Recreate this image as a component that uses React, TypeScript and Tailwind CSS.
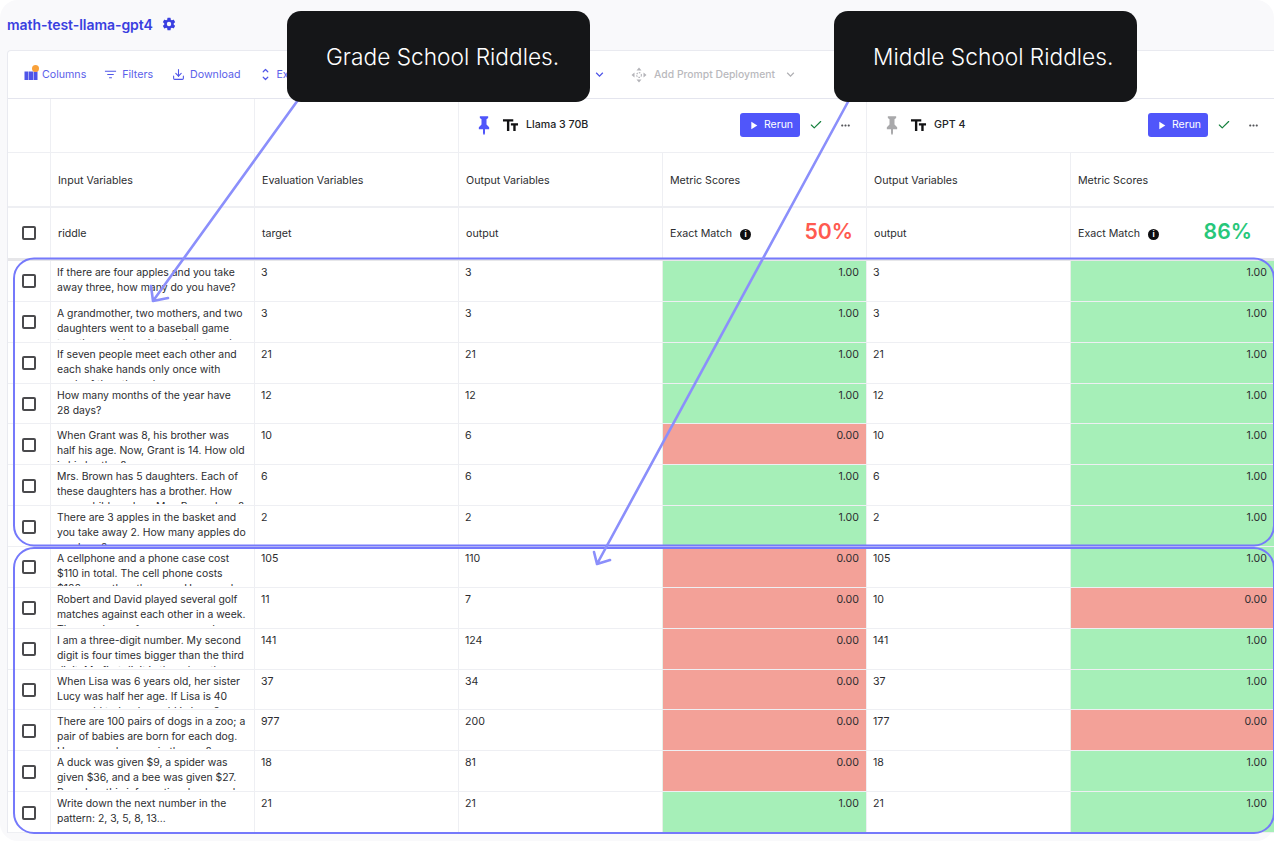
import React from "react";
import { MdPlayArrow, MdMoreHoriz, MdTextFields, MdKeyboardArrowDown } from "react-icons/md";
import { IoSettingsSharp } from "react-icons/io5";
import { LuDownload, LuCheck } from "react-icons/lu";

type Row = { q: string; target: string; o1: string; s1: number; o2: string; s2: number };
const rows: Row[] = [
  { q: "If there are four apples and you take away three, how many do you have?", target: "3", o1: "3", s1: 1, o2: "3", s2: 1 },
  { q: "A grandmother, two mothers, and two daughters went to a baseball game together and bought one ticket each. How", target: "3", o1: "3", s1: 1, o2: "3", s2: 1 },
  { q: "If seven people meet each other and each shake hands only once with each of the others, how", target: "21", o1: "21", s1: 1, o2: "21", s2: 1 },
  { q: "How many months of the year have 28 days?", target: "12", o1: "12", s1: 1, o2: "12", s2: 1 },
  { q: "When Grant was 8, his brother was half his age. Now, Grant is 14. How old is his brother?", target: "10", o1: "6", s1: 0, o2: "10", s2: 1 },
  { q: "Mrs. Brown has 5 daughters. Each of these daughters has a brother. How many children does Mrs. Brown have?", target: "6", o1: "6", s1: 1, o2: "6", s2: 1 },
  { q: "There are 3 apples in the basket and you take away 2. How many apples do you have?", target: "2", o1: "2", s1: 1, o2: "2", s2: 1 },
  { q: "A cellphone and a phone case cost $110 in total. The cell phone costs $100 more than the case. How much", target: "105", o1: "110", s1: 0, o2: "105", s2: 1 },
  { q: "Robert and David played several golf matches against each other in a week. They each won four games, and", target: "11", o1: "7", s1: 0, o2: "10", s2: 0 },
  { q: "I am a three-digit number. My second digit is four times bigger than the third digit. My first digit is three less than", target: "141", o1: "124", s1: 0, o2: "141", s2: 1 },
  { q: "When Lisa was 6 years old, her sister Lucy was half her age. If Lisa is 40 years old today, how old is Lucy?", target: "37", o1: "34", s1: 0, o2: "37", s2: 1 },
  { q: "There are 100 pairs of dogs in a zoo; a pair of babies are born for each dog. How many dogs are in the zoo?", target: "977", o1: "200", s1: 0, o2: "177", s2: 0 },
  { q: "A duck was given $9, a spider was given $36, and a bee was given $27. Based on this information, how much", target: "18", o1: "81", s1: 0, o2: "18", s2: 1 },
  { q: "Write down the next number in the pattern: 2, 3, 5, 8, 13...", target: "21", o1: "21", s1: 1, o2: "21", s2: 1 },
];

const GRID = "grid grid-cols-[42px_204px_204px_204px_204px_204px_204px]";
const CELL = "border-l border-[#eeeff3] min-w-0";

function Checkbox() {
  return <div className="w-[14px] h-[14px] rounded-[2px] border-2 border-[#4a4a4d] bg-white" />;
}

function Score({ v }: { v: number }) {
  return (
    <div className={`${v ? "bg-[#a6efb8]" : "bg-[#f3a198]"} border-l border-[#e6f0e8] text-right pr-[7px] pt-[4px] text-[10.6px] leading-[15px] text-[#2c2d30]`}>
      {v.toFixed(2)}
    </div>
  );
}

function Pin({ color }: { color: string }) {
  return (
    <svg viewBox="0 0 24 24" className="w-[20px] h-[20px]" fill={color}>
      <path d="M7 1.5h10v2.2l-2 1.3v6.5l3.2 3.3v2.2H13.2v5l-1.2 2.5-1.2-2.5v-5H5.8v-2.2L9 11.5V5L7 3.7z" />
    </svg>
  );
}

function ModelHead({ pinned, name }: { pinned: boolean; name: string }) {
  return (
    <div className="col-span-2 border-l border-[#eeeff3] flex items-center pl-[15px] pr-[14px] pb-[1px]">
      <Pin color={pinned ? "#4f55fa" : "#a9a9ab"} />
      <MdTextFields className="ml-[7px] text-[#111113]" size={19} />
      <span className="ml-[6px] text-[10.65px] font-medium text-[#222326]">{name}</span>
      <button className="ml-auto h-[24px] w-[60px] rounded-[3px] bg-[#5056fa] flex items-center justify-center gap-[4px] text-[10.5px] text-white">
        <MdPlayArrow size={13} />
        Rerun
      </button>
      <LuCheck className="ml-[9px] text-[#15803d]" size={14} strokeWidth={2} />
      <MdMoreHoriz className="ml-[16px] text-[#55565a]" size={13} />
    </div>
  );
}

function Info() {
  return (
    <span className="ml-[8px] inline-flex w-[11px] h-[11px] rounded-full bg-[#0e0e10] text-white text-[8px] font-bold items-center justify-center leading-none">i</span>
  );
}

export default function App() {
  return (
    <div className="relative w-[1274px] h-[841px] bg-white overflow-hidden font-['Inter',sans-serif]">
      <div className="h-full rounded-[18px] bg-[#f9f9fb] flex flex-col">
        <div className="h-[50px] pl-[7px] pb-[2px] flex items-center gap-[8px] shrink-0">
          <span className="text-[14px] font-semibold text-[#3a3fe0] tracking-[-0.05px]">math-test-llama-gpt4</span>
          <IoSettingsSharp className="text-[#3a3fe0] ml-[1px]" size={14} />
        </div>
        <div className="ml-[7px] border-l border-t border-[#e9eaf0] rounded-tl-[4px] bg-white w-[1267px]">
          <div className="h-[48px] border-b border-[#e4e5ee] flex items-center pl-[16px] text-[10.65px] text-[#5a60ea]">
            <span className="relative w-[14px] h-[14px] mr-[4px]">
              <svg viewBox="0 0 14 14" className="w-[14px] h-[14px]">
                <rect x="0.5" y="3.5" width="4" height="8.5" fill="#4f55e8" />
                <rect x="5" y="3.5" width="4" height="8.5" fill="#4f55e8" />
                <rect x="9.5" y="3.5" width="4" height="8.5" fill="#4f55e8" />
              </svg>
              <span className="absolute right-[-1px] top-[-3px] w-[7px] h-[7px] rounded-full bg-[#f9a13a]" />
            </span>
            <span>Columns</span>
            <svg viewBox="0 0 14 14" className="ml-[18px] w-[13px] h-[13px]" fill="none" stroke="#4f55e8" strokeWidth="1.3">
              <path d="M1 3.5h12M3.5 7h7M5.5 10.5h3" />
            </svg>
            <span className="ml-[5px]">Filters</span>
            <LuDownload className="ml-[19px] text-[#4f55e8]" size={13} />
            <span className="ml-[5px]">Download</span>
            <svg viewBox="0 0 12 14" className="ml-[20px] w-[11px] h-[13px]" fill="none" stroke="#4f55e8" strokeWidth="1.3" strokeLinecap="round" strokeLinejoin="round">
              <path d="M3.5 4L6 1.5 8.5 4M3.5 10L6 12.5 8.5 10" />
            </svg>
            <span className="ml-[5px]">Expand</span>
            <MdKeyboardArrowDown className="ml-[278px] text-[#4f55e8]" size={15} />
            <svg viewBox="0 0 16 16" className="ml-[24px] w-[16px] h-[16px]" fill="#b4b4b9">
              <path d="M8 .5L10.500 3.500h-5zM8 15.500L5.500 12.500h5zM.5 8L3.500 5.500v5zM15.500 8L12.500 10.500v-5z" />
              <circle cx="8" cy="8" r="2.4" fill="none" stroke="#b4b4b9" strokeWidth="1.1" strokeDasharray="1.5 1" />
            </svg>
            <span className="ml-[7px] text-[#b9b9bd] text-[10.35px] font-medium">Add Prompt Deployment</span>
            <MdKeyboardArrowDown className="ml-[8px] text-[#b0b0b4]" size={15} />
          </div>

          <div className={`${GRID} h-[54px] border-b border-[#eeeff3]`}>
            <div />
            <div className={CELL} />
            <div className={CELL} />
            <ModelHead pinned name="Llama 3 70B" />
            <ModelHead pinned={false} name="GPT 4" />
          </div>

          <div className={`${GRID} h-[55px] border-b-2 border-[#eeeff3] text-[10.65px] text-[#2c2d30]`}>
            <div />
            {["Input Variables", "Evaluation Variables", "Output Variables", "Metric Scores", "Output Variables", "Metric Scores"].map((t, i) => (
              <div key={i} className={`${CELL} flex items-center pl-[7px] pt-[2px]`}>{t}</div>
            ))}
          </div>

          <div className={`${GRID} h-[53px] border-b-[3px] border-[#e6e6e9] text-[10.65px] text-[#2c2d30]`}>
            <div className="flex items-center justify-center"><Checkbox /></div>
            <div className={`${CELL} flex items-center pl-[7px] pt-[2px]`}>riddle</div>
            <div className={`${CELL} flex items-center pl-[7px] pt-[2px]`}>target</div>
            <div className={`${CELL} flex items-center pl-[7px] pt-[2px]`}>output</div>
            <div className={`${CELL} flex items-center pl-[7px] pr-[13px] pt-[2px]`}>
              Exact Match<Info />
              <span className="ml-auto mb-[5px] text-[21.2px] font-semibold text-[#ff5a50]">50%</span>
            </div>
            <div className={`${CELL} flex items-center pl-[7px] pt-[2px]`}>output</div>
            <div className={`${CELL} flex items-center pl-[7px] pr-[22px] pt-[2px]`}>
              Exact Match<Info />
              <span className="ml-auto mb-[5px] text-[21.2px] font-semibold text-[#27c77a]">86%</span>
            </div>
          </div>

          {rows.map((r, i) => (
            <div key={i} className={`${GRID} h-[40.86px] border-b border-[#eeeff3] text-[10.6px] leading-[15px] text-[#2c2d30] overflow-hidden`}>
              <div className="flex items-center justify-center pt-[1px]"><Checkbox /></div>
              <div className={`${CELL} pl-[6px] pr-[8px] pt-[4px] text-[10.4px]`}>
                <div className="h-[34.5px] overflow-hidden">{r.q}</div>
              </div>
              <div className={`${CELL} pl-[6px] pt-[4px]`}>{r.target}</div>
              <div className={`${CELL} pl-[6px] pt-[4px]`}>{r.o1}</div>
              <Score v={r.s1} />
              <div className={`${CELL} pl-[6px] pt-[4px]`}>{r.o2}</div>
              <Score v={r.s2} />
            </div>
          ))}
        </div>
      </div>

      <svg className="absolute inset-0 w-[1274px] h-[841px] pointer-events-none" viewBox="0 0 1274 841" fill="none">
        <rect x="14" y="258.500" width="1260" height="287" rx="20" stroke="#7579fb" strokeWidth="2" />
        <rect x="14" y="548" width="1260" height="285" rx="20" stroke="#7579fb" strokeWidth="2" />
        <path d="M298 100L153 301M168 298L153 301L151 286" stroke="#8b8ffb" strokeWidth="2.6" strokeLinecap="round" strokeLinejoin="round" />
        <path d="M849 100L597 564M610 560L597 564L594 552" stroke="#8b8ffb" strokeWidth="2.6" strokeLinecap="round" strokeLinejoin="round" />
      </svg>

      <div className="absolute left-[287px] top-[11px] w-[303px] h-[91px] rounded-[14px] bg-[#151618] flex items-center pl-[39px] pt-[2px] text-[22.7px] font-light text-white">
        Grade School Riddles.
      </div>
      <div className="absolute left-[834px] top-[11px] w-[303px] h-[91px] rounded-[14px] bg-[#151618] flex items-center pl-[39px] pt-[2px] text-[22.7px] font-light text-white">
        Middle School Riddles.
      </div>
    </div>
  );
}
